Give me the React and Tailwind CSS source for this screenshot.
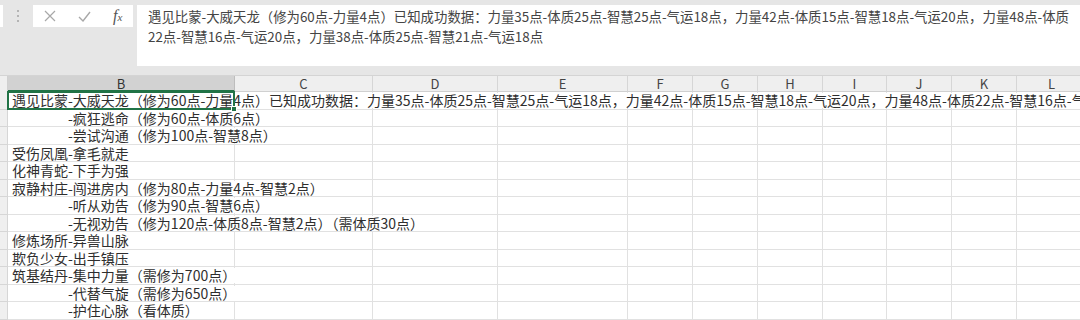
const cols = [
  { l: 'B', w: 227 },
  { l: 'C', w: 138 },
  { l: 'D', w: 125 },
  { l: 'E', w: 130 },
  { l: 'F', w: 65 },
  { l: 'G', w: 65 },
  { l: 'H', w: 65 },
  { l: 'I', w: 64 },
  { l: 'J', w: 65 },
  { l: 'K', w: 65 },
  { l: 'L', w: 70 },
];

const rows = [
  { t: '遇见比蒙-大威天龙（修为60点-力量4点）已知成功数据：力量35点-体质25点-智慧25点-气运18点，力量42点-体质15点-智慧18点-气运20点，力量48点-体质22点-智慧16点-气运20点，力量38点-体质25点-智慧21点-气运18点' },
  { t: '-疯狂逃命（修为60点-体质6点）', indent: true },
  { t: '-尝试沟通（修为100点-智慧8点）', indent: true },
  { t: '受伤凤凰-拿毛就走' },
  { t: '化神青蛇-下手为强' },
  { t: '寂静村庄-闯进房内（修为80点-力量4点-智慧2点）' },
  { t: '-听从劝告（修为90点-智慧6点）', indent: true },
  { t: '-无视劝告（修为120点-体质8点-智慧2点）（需体质30点）', indent: true },
  { t: '修炼场所-异兽山脉' },
  { t: '欺负少女-出手镇压' },
  { t: '筑基结丹-集中力量（需修为700点）' },
  { t: '-代替气旋（需修为650点）', indent: true },
  { t: '-护住心脉（看体质）', indent: true },
];

function FormulaBar() {
  return (
    <div className="h-[76px] bg-[#e6e6e6] flex items-start pt-[5px] border-b border-[#d4d4d4]">
      <div className="w-[3px] h-[22px] bg-white" />
      <div className="w-[30px] h-[22px] flex flex-col items-center justify-center gap-[3px]">
        <span className="w-[2px] h-[2px] bg-[#b4b4b4]" />
        <span className="w-[2px] h-[2px] bg-[#b4b4b4]" />
        <span className="w-[2px] h-[2px] bg-[#b4b4b4]" />
      </div>
      <div className="w-[100px] h-[22px] bg-white flex items-center">
        <svg className="ml-[11px] w-[12px] h-[12px]" viewBox="0 0 12 12" fill="none" stroke="#a8a8a8" strokeWidth="1.2">
          <path d="M1 1l10 10M11 1L1 11" />
        </svg>
        <svg className="ml-[22px] w-[13px] h-[11px]" viewBox="0 0 13 11" fill="none" stroke="#a8a8a8" strokeWidth="1.4">
          <path d="M1 6l4 4 7-9" />
        </svg>
        <span className="ml-[22px] font-['Liberation_Serif',serif] italic text-[16px] leading-none text-[#555]">
          f<span className="text-[11px]">x</span>
        </span>
      </div>
      <div className="ml-[4px] flex-1 h-[61px] bg-white pl-[11px] pt-px text-[13.4px] leading-[20px] text-[#444] whitespace-nowrap overflow-hidden">
        <div>遇见比蒙-大威天龙（修为60点-力量4点）已知成功数据：力量35点-体质25点-智慧25点-气运18点，力量42点-体质15点-智慧18点-气运20点，力量48点-体质</div>
        <div>22点-智慧16点-气运20点，力量38点-体质25点-智慧21点-气运18点</div>
      </div>
    </div>
  );
}

function HeaderRow() {
  return (
    <div className="flex h-[16px] bg-[#efefef] text-[13px] leading-none text-[#444]">
      <div className="w-[8px] shrink-0 border-r border-[#d0d0d0]" />
      {cols.map((c) => (
        <div
          key={c.l}
          style={{ width: c.w }}
          className={
            c.l === 'B'
              ? 'shrink-0 flex items-center justify-center bg-[#d2d2d2] border-r border-[#bdbdbd] border-b-2 border-b-[#217346] text-[#333]'
              : 'shrink-0 flex items-center justify-center border-r border-[#d6d6d6] border-b border-b-[#d0d0d0]'
          }
        >
          {c.l}
        </div>
      ))}
    </div>
  );
}

function Row({ row, i }) {
  return (
    <div className={i % 2 === 0 ? 'flex h-[18px]' : 'flex h-[17px]'}>
      <div className="w-[8px] shrink-0 bg-[#efefef] border-r border-b border-[#d6d6d6]" />
      {cols.map((c, j) => (
        <div
          key={c.l}
          style={{ width: c.w }}
          className="shrink-0 relative flex items-center border-r border-b border-[#e1e1e1]"
        >
          {j === 0 && (
            <span
              className={
                row.indent
                  ? 'relative z-10 ml-[56px] pl-[4px] bg-white whitespace-nowrap leading-[15px] text-[14px] text-[#2e2e2e]'
                  : 'relative z-10 ml-px pl-[3px] bg-white whitespace-nowrap leading-[15px] text-[14px] text-[#2e2e2e]'
              }
            >
              {row.t}
            </span>
          )}
          {i === 0 && j === 0 && (
            <div className="absolute left-[-1px] top-[-1px] w-[228px] h-[19px] border-2 border-[#217346] z-20 pointer-events-none">
              <div className="absolute right-[-4px] bottom-[-4px] w-[6px] h-[6px] bg-[#217346] border border-white" />
            </div>
          )}
        </div>
      ))}
    </div>
  );
}

export default function App() {
  return (
    <div className="w-[1080px] h-[320px] overflow-hidden bg-white font-['Noto_Sans_CJK_SC','Noto_Sans',sans-serif]">
      <FormulaBar />
      <HeaderRow />
      {rows.map((r, i) => (
        <Row key={i} row={r} i={i} />
      ))}
    </div>
  );
}
